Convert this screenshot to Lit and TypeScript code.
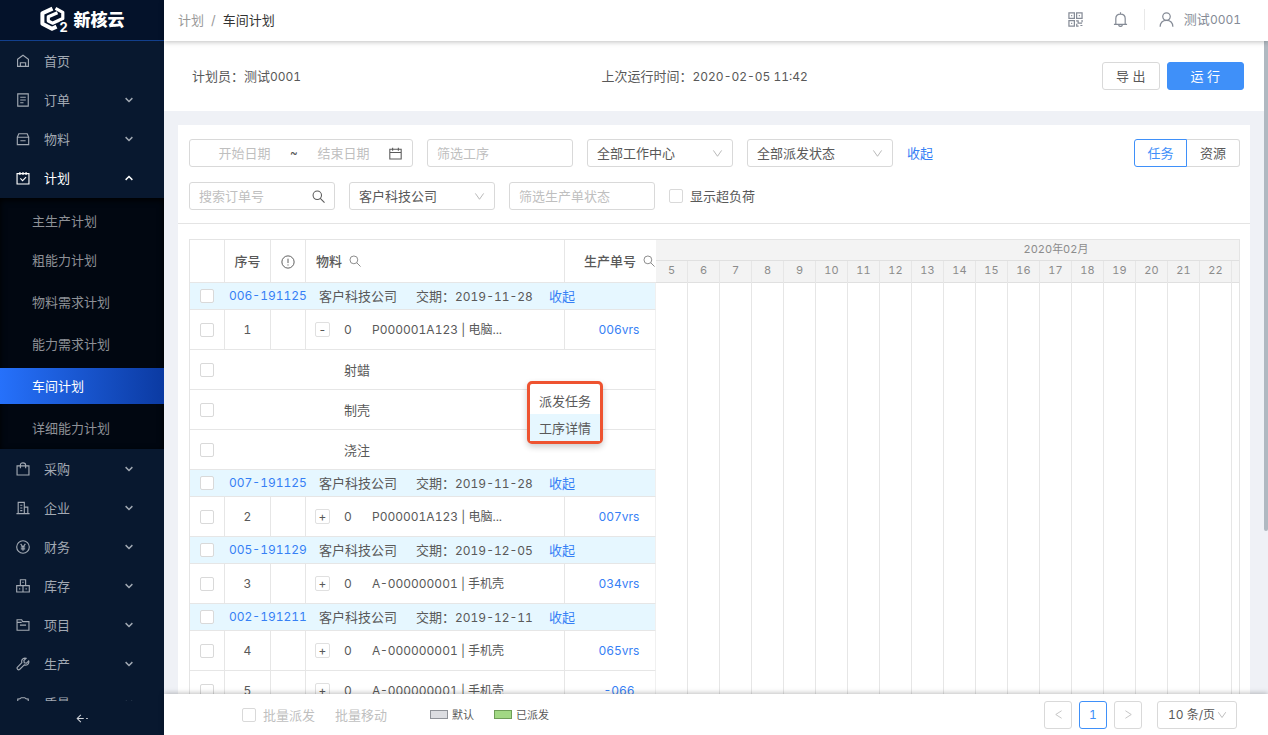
import { LitElement, html, css, svg, nothing } from "lit";
import { customElement, property } from "lit/decorators.js";
import { classMap } from "lit/directives/class-map.js";

const ICONS: Record<string, unknown> = {
  home: svg`<path d="M1.800 6 8 1.500l6.200 4.500V14.200H1.800z M5 14v-4h6v4"/>`,
  order: svg`<path d="M2 1h12v14H2z M4.800 4.800h6.400 M4.800 8h6.400 M4.800 11.200h3.800"/>`,
  box: svg`<path d="M1.500 6h13v8.500h-13z M1.500 6l1.700-4h9.600l1.700 4 M5 10h6"/>`,
  plan: svg`<path d="M1.200 3h13.600v11.800H1.200z M4.500 1v3.500 M8 1v3.500 M11.500 1v3.500 M5 8.500l2.500 2.500 4-4"/>`,
  bag: svg`<path d="M1.200 4.500h13.600v10.300H1.200z M5 7V3.500q0-2.500 3-2.500t3 2.500V7"/>`,
  building: svg`<path d="M.5 14.500h15 M2.500 14.500v-13h7v13 M9.500 7h4v7.500 M4.800 4.800h2.500 M4.800 8h2.500 M4.800 11h2.500"/>`,
  money: svg`<circle cx="8" cy="8" r="7.200"/><path d="M5.300 4.500 8 8l2.700-3.500 M8 8v4.200 M5.500 8h5 M5.500 10.200h5"/>`,
  stock: svg`<path d="M5 .8h6v6.700H5z M.8 7.500h7.200v7.300H.8z M8 7.500h7.200v7.300H8z M8 3v1.500 M4.200 10.500v1.500 M11.600 10.500v1.500"/>`,
  folder: svg`<path d="M1.200 2h5.300l1.200 2.200h7.100v9.800H1.200z M4.500 8.200h7 M1.500 5h5"/>`,
  wrench: svg`<path d="M14.500 4.500 12 7 9.500 6.500 9 4l2.500-2.500Q8.500.8 7 3q-.9 1.500-.3 3.500L1.500 11.700q-.8 1.200.3 2.300t2.300.3L9.500 9q2.200.6 3.800-.5 2-1.600 1.200-4z"/>`,
  quality: svg`<path d="M2 5V3.500q3 0 4-1.500h4q1 1.500 4 1.500V9q0 4-6 6-6-2-6-6z"/>`,
  down: svg`<path d="M3.500 5.500 8 10l4.500-4.500"/>`,
  up: svg`<path d="M3.500 10.500 8 6l4.500 4.500"/>`,
  chevron: svg`<path d="M2 3.500 8 12l6-8.500"/>`,
  left: svg`<path d="M12.500 2.500 4 8l8.500 5.500"/>`,
  right: svg`<path d="M3.500 2.500 12 8l-8.500 5.500"/>`,
  collapse: svg`<path d="M6 3.500 1.500 8 6 12.500 M1.500 8h8 M12.500 8h2"/>`,
  search: svg`<circle cx="6.500" cy="6.500" r="5.200"/><path d="M10.200 10.200l5.200 5.200"/>`,
  calendar: svg`<path d="M1 2.800h14v12H1z M1 6.800h14 M4.500 .8v3.700 M11.500 .8v3.700"/>`,
  info: svg`<circle cx="8" cy="8" r="7"/><path d="M8 4.200v5 M8 10.800v1.200"/>`,
  qr: svg`<path d="M1 1h5.800v5.800H1z M9.200 1H15v5.800H9.200z M1 9.200h5.800V15H1z M3.300 3.900h1.200 M11.500 3.900h1.200 M3.300 12.100h1.200 M8.600 9.500h2.200v2.300h4.200 M15 8.600v2.200 M9.300 12.500V15h2 M13.200 14.400h2.200"/>`,
  bell: svg`<path d="M1 13.200h14 M3 13.200V7q0-4.700 5-4.700T13 7v6.200 M8 .3v2 M6 13.700q.4 1.700 2 1.700t2-1.700"/>`,
  user: svg`<circle cx="8" cy="4.900" r="4"/><path d="M1.200 15.800Q1.500 9 8 9t6.800 6.800"/>`,
};

@customElement("ui-icon")
export class UiIcon extends LitElement {
  @property() name = "";
  static styles = css`
    :host { display: inline-flex; flex: none; width: 14px; height: 14px; }
    svg { width: 100%; height: 100%; fill: none; stroke: currentColor; stroke-width: var(--stroke, 1.3); display: block; }
  `;
  render() {
    return html`<svg viewBox="0 0 16 16" aria-hidden="true">${ICONS[this.name]}</svg>`;
  }
}

@customElement("side-nav")
export class SideNav extends LitElement {
  static styles = css`
    :host { display: flex; flex-direction: column; min-height: 0; background: #08182f; color: #a2a9b3; }
    .brand { display: flex; align-items: center; justify-content: center; gap: 6px; flex: none; height: 38px;
      padding-bottom: 2px; background: #04122a; border-bottom: 1px solid #123f8c; color: #fff;
      font: 900 17px/24px "Noto Sans CJK SC", sans-serif; }
    .mark { width: 28px; height: 26px; }
    .mark text { font: 700 13px Inter, sans-serif; }
    .menu { flex: 1; min-height: 0; overflow: hidden; }
    .item { display: flex; align-items: center; height: 39px; padding: 0 29px 0 16px; color: inherit; text-decoration: none; }
    .item span { flex: 1; margin-left: 14px; }
    .item .arrow { width: 12px; height: 12px; --stroke: 1.9; }
    .open { color: #fff; }
    .sub { background: #010711; padding: 5px 0 3px; margin-top: 1px; display: grid; row-gap: 6px;
      box-shadow: inset 0 2px 6px #000; }
    .sub a { display: block; height: 36px; line-height: 36px; padding-left: 32px; color: #8e9197; text-decoration: none; }
    .sub a:first-child { margin-bottom: -3px; }
    .sub a.active { background: linear-gradient(90deg, #2671fb, #0b3aa2); color: #fff; }
    .fold { flex: none; height: 34px; border: 0; background: none; color: #d0d4da; display: flex;
      align-items: center; justify-content: center; padding: 0; }
    .fold ui-icon { width: 13px; height: 13px; }
  `;
  private row(icon: string, label: string, arrow = "down") {
    return html`<a class=${classMap({ item: true, open: arrow === "up" })} href="#">
      <ui-icon name=${icon}></ui-icon><span>${label}</span>
      ${arrow ? html`<ui-icon class="arrow" name=${arrow}></ui-icon>` : nothing}
    </a>`;
  }
  render() {
    const subs = ["主生产计划", "粗能力计划", "物料需求计划", "能力需求计划", "车间计划", "详细能力计划"];
    return html`
      <div class="brand">
        <svg class="mark" viewBox="0 0 28 26" aria-hidden="true">
          <g fill="none" stroke="#fff" stroke-linejoin="round">
            <path d="M12.500 2.600 2.400 7.200v10.600l9.600 5 4.500-2.200" stroke-width="4"/>
            <path d="M15.500 2.400l7.300 3.900v6.200L12.500 17.200 8.300 15V10.800l9.200-4" stroke-width="3.200"/>
          </g>
          <text x="19.500" y="26" fill="#fff" stroke="#04122a" stroke-width="2.500" paint-order="stroke">2</text>
        </svg>
        <div>新核云</div>
      </div>
      <nav class="menu">
        ${this.row("home", "首页", "")} ${this.row("order", "订单")} ${this.row("box", "物料")}
        ${this.row("plan", "计划", "up")}
        <div class="sub">
          ${subs.map((s) => html`<a href="#" class=${classMap({ active: s === "车间计划" })}>${s}</a>`)}
        </div>
        ${this.row("bag", "采购")} ${this.row("building", "企业")} ${this.row("money", "财务")}
        ${this.row("stock", "库存")} ${this.row("folder", "项目")} ${this.row("wrench", "生产")}
        ${this.row("quality", "质量")}
      </nav>
      <button class="fold" aria-label="收起菜单"><ui-icon name="collapse"></ui-icon></button>
    `;
  }
}

type Row =
  | { kind: "group"; order: string; due: string }
  | { kind: "item"; no: number; open?: boolean; part: string; mo: string }
  | { kind: "step"; name: string };

const ROWS: Row[] = [
  { kind: "group", order: "006-191125", due: "2019-11-28" },
  { kind: "item", no: 1, open: true, part: "P000001A123 | 电脑...", mo: "006vrs" },
  { kind: "step", name: "射蜡" },
  { kind: "step", name: "制壳" },
  { kind: "step", name: "浇注" },
  { kind: "group", order: "007-191125", due: "2019-11-28" },
  { kind: "item", no: 2, part: "P000001A123 | 电脑...", mo: "007vrs" },
  { kind: "group", order: "005-191129", due: "2019-12-05" },
  { kind: "item", no: 3, part: "A-000000001 | 手机壳", mo: "034vrs" },
  { kind: "group", order: "002-191211", due: "2019-12-11" },
  { kind: "item", no: 4, part: "A-000000001 | 手机壳", mo: "065vrs" },
  { kind: "item", no: 5, part: "A-000000001 | 手机壳", mo: "-066" },
];

const DAYS = Array.from({ length: 25 }, (_, i) => i + 5);

@customElement("app-root")
export class AppRoot extends LitElement {
  static styles = css`
    :host { display: grid; grid-template-columns: 164px minmax(0, 1fr); height: 100vh; overflow: hidden;
      font: 13px/20px Inter, "Noto Sans CJK SC", sans-serif; font-variant-numeric: tabular-nums; color: #595959; }
    * { box-sizing: border-box; }
    button, input, select { font: inherit; color: inherit; font-variant-numeric: inherit; }
    a { color: #3680f5; text-decoration: none; }
    .num { font-size: 12px; }
    .main { display: flex; flex-direction: column; min-width: 0; min-height: 0; }

    .top { flex: none; display: flex; align-items: center; height: 41px; padding: 0 27px 2px 14px; background: #fff;
      box-shadow: 0 1px 5px rgba(0, 0, 0, 0.25); z-index: 2; }
    .crumbs { flex: 1; display: flex; gap: 7px; color: #999; }
    .crumbs b { font-weight: 400; color: #333; }
    .tools { display: flex; align-items: center; color: #858b96; }
    .tools button { display: flex; border: 0; background: none; padding: 0; }
    .tools ui-icon { width: 15px; height: 15px; }
    .bell { margin: 0 16px 0 30px; }
    .me { display: flex; align-items: center; gap: 10px; height: 21px; border-left: 1px solid #e8e8e8; padding-left: 14px; }

    .body { position: relative; flex: 1; min-height: 0; overflow: hidden; background: #eff1f6; padding-right: 4px; }
    .thumb { position: absolute; right: 0; top: 0; width: 4px; height: 75%; background: #b0b9c1; border-radius: 0 0 2px 2px; }
    .summary { display: flex; align-items: center; height: 70px; padding: 0 20px 0 28px; background: #fff; }
    .facts { flex: 1; display: grid; grid-template-columns: 45% 1fr; }
    .actions { display: flex; gap: 7px; }
    .btn { height: 28px; padding: 0 13px; border: 1px solid #d9d9d9; border-radius: 3px; background: #fff; }
    .btn.primary { background: #3f90f9; border-color: #3f90f9; color: #fff; padding: 0 23px; }

    .card { margin: 14px; background: #fff; }
    .filters { display: flex; align-items: flex-start; justify-content: space-between; padding: 14px 10px 13px 11px;
      border-bottom: 1px solid #e4e4e4; }
    .lines { display: grid; row-gap: 15px; }
    .line { display: flex; align-items: center; gap: 14px; height: 28px; }
    .field { display: flex; align-items: center; height: 28px; width: 146px; padding: 0 9px; background: #fff;
      border: 1px solid #d9d9d9; border-radius: 3px; }
    .field input, .field select { flex: 1; width: 100%; min-width: 0; height: 100%; border: 0; outline: 0; padding: 0;
      background: none; appearance: none; }
    .field ui-icon { width: 13px; height: 13px; }
    .field .chev { width: 11px; height: 11px; color: #b0b0b0; pointer-events: none; }
    input::placeholder { color: #bfbfbf; opacity: 1; }
    .range { width: 224px; padding-right: 10px; }
    .range input { text-align: center; }
    input[type="checkbox"] { appearance: none; flex: none; display: block; width: 14px; height: 14px; margin: 0;
      border: 1px solid #d9d9d9; border-radius: 2px; background: #fff; }
    .check { display: flex; align-items: center; gap: 7px; }
    .modes { display: flex; }
    .modes label { width: 53px; height: 28px; line-height: 26px; text-align: center; border: 1px solid #d9d9d9; border-left: 0;
      border-radius: 0 3px 3px 0; }
    .modes label.on { border: 1px solid #3f90f9; border-radius: 3px 0 0 3px; color: #3f90f9; }
    .modes input { appearance: none; position: absolute; margin: 0; }

    .board { position: relative; display: flex; margin: 15px 10px 0 11px; border-top: 1px solid #e4e4e4; }
    table { flex: none; width: 467px; table-layout: fixed; border-collapse: separate; border-spacing: 0;
      border-left: 1px solid #e4e4e4; }
    td, th { padding: 0; border-bottom: 1px solid #e6e6e6; text-align: left; white-space: nowrap; }
    th, .item td { border-right: 1px solid #e6e6e6; }
    th:last-child { border-right: 0; }
    tr td:last-child { border-right: 1px solid #f0f0f0; }
    th { height: 43px; font-weight: 500; }
    .group td { height: 27px; background: #e6f7ff; }
    .item td, .step td { height: 40px; }
    td input[type="checkbox"] { margin-left: 10px; }
    .c0 { width: 35px; } .c1 { width: 46px; } .c2 { width: 35px; } .c3 { width: 259px; }
    .center, .item .center { text-align: center; }
    th.center ui-icon { vertical-align: middle; --stroke: 1.1; }
    .head { display: flex; align-items: center; gap: 7px; padding-left: 10px; }
    .head ui-icon { width: 12px; height: 12px; color: #8a8a8a; }
    .head.mo { padding: 0 1px 0 0; justify-content: flex-end; }
    .ginfo { display: grid; grid-template-columns: 90px 97px 133px auto; padding-left: 4px; }
    .part { display: flex; align-items: center; padding-left: 9px; }
    .part button { width: 15px; height: 15px; padding: 0; border: 1px solid #e0e0e0; border-radius: 2px; background: #fff;
      font-size: 12px; line-height: 12px; }
    .qty { width: 28px; margin-left: 14px; }
    .item td.mono { padding-left: 18px; text-align: center; }
    .stepname { padding-left: 119px; }

    .gantt { flex: 1; min-width: 0; overflow: hidden; display: flex; flex-direction: column; border-right: 1px solid #e4e4e4;
      font-size: 11px; color: #8c8c8c; }
    .month { width: 800px; height: 21px; line-height: 18px; text-align: center; background: #f3f3f3; border-bottom: 1px solid #e0e0e0; }
    .days { flex: 1; display: grid; grid-template-columns: repeat(25, 32px); }
    .day { border-right: 1px solid #e6e6e6; }
    .day span { display: block; height: 22px; line-height: 19px; text-align: center; background: #f3f3f3; border-bottom: 1px solid #e0e0e0; }

    .popup { position: absolute; left: 338px; top: 141px; width: 76px; border: 3px solid #ee5330; border-radius: 5px;
      background: #fff; padding-top: 3px; box-shadow: 0 3px 6px rgba(0, 0, 0, 0.2); display: grid; }
    .popup button { height: 27px; border: 0; background: none; padding: 0 9px; text-align: left; white-space: nowrap; }
    .popup .hover { background: #e6f7ff; }

    .foot { flex: none; display: flex; align-items: center; height: 41px; padding: 0 31px 0 78px; background: #fff;
      box-shadow: 0 -1px 5px rgba(0, 0, 0, 0.25); z-index: 2; }
    .bulk { display: flex; gap: 20px; color: #bfbfbf; }
    .bulk button { border: 0; background: none; padding: 0; }
    .legend { flex: 1; display: flex; gap: 20px; margin-left: 43px; font-size: 11px; }
    .legend span { display: flex; align-items: center; gap: 4px; }
    .legend i { width: 18px; height: 9px; border: 1px solid #909399; background: #dcdde1; }
    .legend i.sent { background: #a2d884; border-color: #6f9e58; }
    .pager { display: flex; gap: 7px; }
    .pager button { display: flex; align-items: center; justify-content: center; width: 28px; height: 28px; padding: 0;
      border: 1px solid #d9d9d9; border-radius: 3px; background: #fff; color: #bfbfbf; }
    .pager button.on { border-color: #3f90f9; color: #3f90f9; }
    .pager ui-icon { width: 11px; height: 11px; }
    .field.size { width: 80px; margin-left: 8px; padding: 0 9px 0 10px; font-size: 12px; }
    .field.size .chev { width: 10px; height: 10px; }
  `;

  private select(label: string, value: string) {
    return html`<label class="field"><select aria-label=${label}><option>${value}</option></select>
      <ui-icon class="chev" name="chevron"></ui-icon></label>`;
  }

  private row(r: Row) {
    const box = html`<td><input type="checkbox" aria-label="选择" /></td>`;
    if (r.kind === "group") {
      return html`<tr class="group">${box}<td colspan="4"><div class="ginfo">
        <a class="num" href="#">${r.order}</a><span>客户科技公司</span><span>交期：<span class="num">${r.due}</span></span><a href="#">收起</a>
      </div></td></tr>`;
    }
    if (r.kind === "step") {
      return html`<tr class="step">${box}<td colspan="4" class="stepname">${r.name}</td></tr>`;
    }
    return html`<tr class="item">${box}
      <td class="center num">${r.no}</td><td></td>
      <td><div class="part"><button>${r.open ? "-" : "+"}</button><span class="qty num">0</span><span class="num">${r.part}</span></div></td>
      <td class="mono num"><a href="#">${r.mo}</a></td></tr>`;
  }

  render() {
    return html`
      <side-nav></side-nav>
      <div class="main">
        <header class="top">
          <div class="crumbs"><span>计划</span><span>/</span><b>车间计划</b></div>
          <div class="tools">
            <button aria-label="二维码"><ui-icon name="qr"></ui-icon></button>
            <button class="bell" aria-label="通知"><ui-icon name="bell"></ui-icon></button>
            <div class="me"><ui-icon name="user"></ui-icon><span>测试<span class="num">0001</span></span></div>
          </div>
        </header>
        <main class="body">
          <section class="summary">
            <div class="facts">
              <span>计划员：测试<span class="num">0001</span></span>
              <span>上次运行时间：<span class="num">2020-02-05 11:42</span></span>
            </div>
            <div class="actions"><button class="btn">导 出</button><button class="btn primary">运 行</button></div>
          </section>
          <section class="card">
            <div class="filters">
              <div class="lines">
                <div class="line">
                  <div class="field range">
                    <input aria-label="开始日期" placeholder="开始日期" /><span class="num">~</span><input aria-label="结束日期" placeholder="结束日期" />
                    <ui-icon name="calendar"></ui-icon>
                  </div>
                  <label class="field"><input aria-label="筛选工序" placeholder="筛选工序" /></label>
                  ${this.select("工作中心", "全部工作中心")} ${this.select("派发状态", "全部派发状态")}
                  <a href="#">收起</a>
                </div>
                <div class="line">
                  <label class="field"><input aria-label="搜索订单号" placeholder="搜索订单号" /><ui-icon name="search"></ui-icon></label>
                  ${this.select("客户", "客户科技公司")}
                  <label class="field"><input aria-label="筛选生产单状态" placeholder="筛选生产单状态" /></label>
                  <label class="check"><input type="checkbox" />显示超负荷</label>
                </div>
              </div>
              <div class="modes">
                <label class="on"><input type="radio" name="mode" checked />任务</label>
                <label><input type="radio" name="mode" />资源</label>
              </div>
            </div>
            <div class="board">
              <table>
                <colgroup><col class="c0" /><col class="c1" /><col class="c2" /><col class="c3" /><col /></colgroup>
                <thead><tr>
                  <th></th><th class="center">序号</th><th class="center"><ui-icon name="info"></ui-icon></th>
                  <th><div class="head">物料<ui-icon name="search"></ui-icon></div></th>
                  <th><div class="head mo">生产单号<ui-icon name="search"></ui-icon></div></th>
                </tr></thead>
                <tbody>${ROWS.map((r) => this.row(r))}</tbody>
              </table>
              <div class="gantt">
                <div class="month">2020年02月</div>
                <div class="days">${DAYS.map((d) => html`<div class="day"><span>${d}</span></div>`)}</div>
              </div>
              <div class="popup"><button>派发任务</button><button class="hover">工序详情</button></div>
            </div>
          </section>
          <div class="thumb"></div>
        </main>
        <footer class="foot">
          <div class="bulk">
            <label class="check"><input type="checkbox" disabled />批量派发</label>
            <button disabled>批量移动</button>
          </div>
          <div class="legend"><span><i></i>默认</span><span><i class="sent"></i>已派发</span></div>
          <div class="pager">
            <button aria-label="上一页"><ui-icon name="left"></ui-icon></button>
            <button class="on num">1</button>
            <button aria-label="下一页"><ui-icon name="right"></ui-icon></button>
            <label class="field size"><select aria-label="每页条数"><option>10 条/页</option></select>
              <ui-icon class="chev" name="chevron"></ui-icon></label>
          </div>
        </footer>
      </div>
    `;
  }
}
